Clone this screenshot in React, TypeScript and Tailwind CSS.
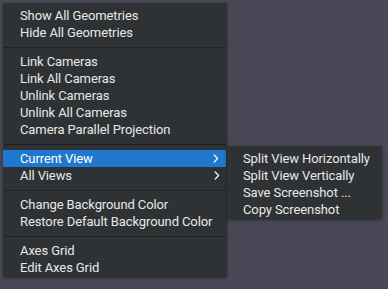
import { Fragment } from 'react';

type Item = { label: string; sub?: boolean; active?: boolean };

const groups: Item[][] = [
  [{ label: 'Show All Geometries' }, { label: 'Hide All Geometries' }],
  [
    { label: 'Link Cameras' },
    { label: 'Link All Cameras' },
    { label: 'Unlink Cameras' },
    { label: 'Unlink All Cameras' },
    { label: 'Camera Parallel Projection' },
  ],
  [
    { label: 'Current View', sub: true, active: true },
    { label: 'All Views', sub: true },
  ],
  [{ label: 'Change Background Color' }, { label: 'Restore Default Background Color' }],
  [{ label: 'Axes Grid' }, { label: 'Edit Axes Grid' }],
];

const subItems = ['Split View Horizontally', 'Split View Vertically', 'Save Screenshot ...', 'Copy Screenshot'];

function Chevron() {
  return (
    <svg width="6" height="9" viewBox="0 0 6 9" className="absolute right-[7px] top-[4px]">
      <polyline points="1.2,1 4.6,4.5 1.2,8" fill="none" stroke="#f2f2f2" strokeWidth="1.3" strokeLinecap="round" strokeLinejoin="round" />
    </svg>
  );
}

function SubMenu() {
  return (
    <div className="absolute left-[224px] top-[-4px] w-[155px] bg-[#2f3234] pt-[4px] pb-[1px] shadow-[0_1px_3px_rgba(0,0,0,0.45)]">
      {subItems.map((s) => (
        <div key={s} className="h-[17px] leading-[17px] pl-[16px] text-[#e8e8e8] whitespace-nowrap">
          {s}
        </div>
      ))}
    </div>
  );
}

export default function App() {
  return (
    <div
      className="w-[388px] h-[289px] bg-[#4a4857] p-[3px] text-[13px] tracking-[-0.1px] overflow-hidden"
      style={{ fontFamily: 'Roboto, "Liberation Sans", sans-serif' }}
    >
      <div className="relative w-[224px] bg-[#2f3234] pt-[4px] pb-[1px] shadow-[0_1px_3px_rgba(0,0,0,0.45)]">
        {groups.map((g, gi) => (
          <Fragment key={gi}>
            {gi > 0 && (
              <div className="h-[12px] flex items-center px-[1px]">
                <div className="h-px w-full bg-[#1f2123]" />
              </div>
            )}
            {g.map((it) => (
              <div
                key={it.label}
                className={
                  it.active
                    ? 'relative h-[17px] leading-[17px] pl-[17px] mr-[1px] bg-[#1f78cd] text-white whitespace-nowrap'
                    : 'relative h-[17px] leading-[17px] pl-[17px] text-[#e8e8e8] whitespace-nowrap'
                }
              >
                {it.label}
                {it.sub && <Chevron />}
                {it.active && <SubMenu />}
              </div>
            ))}
          </Fragment>
        ))}
      </div>
    </div>
  );
}
